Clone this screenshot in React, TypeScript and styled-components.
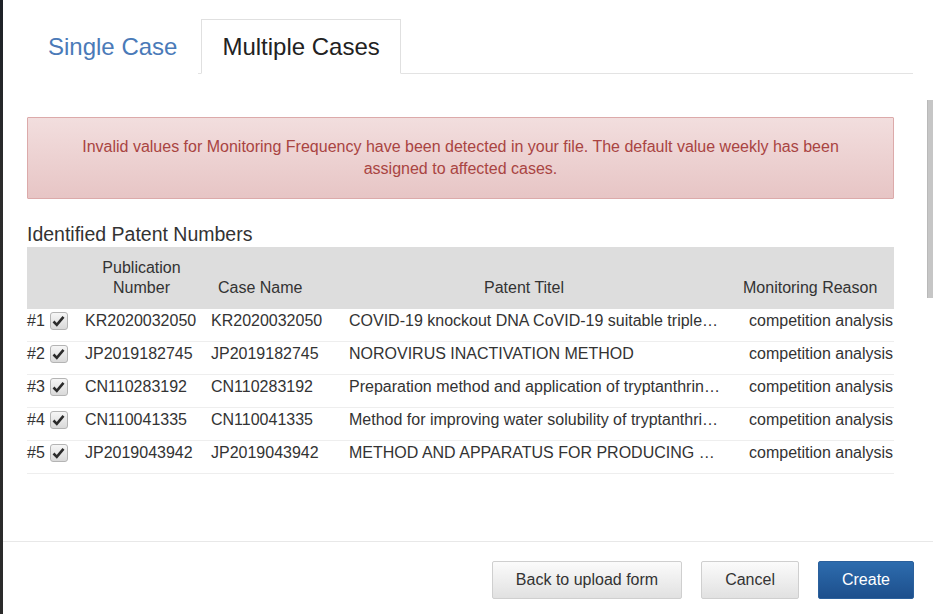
import React from "react";
import styled, { createGlobalStyle } from "styled-components";

interface IPatent {
  id: number;
  publication: string;
  caseName: string;
  title: string;
  reason: string;
}

const patents: IPatent[] = [
  {
    id: 1,
    publication: "KR2020032050",
    caseName: "KR2020032050",
    title: "COVID-19 knockout DNA CoVID-19 suitable triplex primer set and detection method",
    reason: "competition analysis",
  },
  {
    id: 2,
    publication: "JP2019182745",
    caseName: "JP2019182745",
    title: "NOROVIRUS INACTIVATION METHOD",
    reason: "competition analysis",
  },
  {
    id: 3,
    publication: "CN110283192",
    caseName: "CN110283192",
    title: "Preparation method and application of tryptanthrin derivatives",
    reason: "competition analysis",
  },
  {
    id: 4,
    publication: "CN110041335",
    caseName: "CN110041335",
    title: "Method for improving water solubility of tryptanthrin compounds",
    reason: "competition analysis",
  },
  {
    id: 5,
    publication: "JP2019043942",
    caseName: "JP2019043942",
    title: "METHOD AND APPARATUS FOR PRODUCING \u2026",
    reason: "competition analysis",
  },
];

const GlobalStyle = createGlobalStyle`
  html, body {
    margin: 0;
    padding: 0;
    background: #ffffff;
  }
  body {
    font-family: "Liberation Sans", Arial, sans-serif;
    color: #333333;
  }
`;

const App = () => {
  return (
    <Page>
      <GlobalStyle />
      <EdgeStrip />
      <Modal>
        <TabBar>
          <TabNav>
            <Tab>Single Case</Tab>
            <Tab $active>Multiple Cases</Tab>
          </TabNav>
        </TabBar>
        <Body>
          <Alert>
            Invalid values for Monitoring Frequency have been detected in your file. The default value weekly has been
            assigned to affected cases.
          </Alert>
          <SectionTitle>Identified Patent Numbers</SectionTitle>
          <HeadRow>
            <HeadCell />
            <HeadCell $align="center">
              Publication
              <br />
              Number
            </HeadCell>
            <HeadCell $pl={13}>Case Name</HeadCell>
            <HeadCell $align="center" $pr={38}>
              Patent Titel
            </HeadCell>
            <HeadCell>Monitoring Reason</HeadCell>
          </HeadRow>
          {patents.map((item) => (
            <Row key={`patent-${item.id}`}>
              <IndexCell>
                #{item.id}
                <CheckBox>
                  <svg width="13" height="12" viewBox="0 0 13 12">
                    <path d="M1.5 6.5 L4.8 9.8 L11.5 1.8" fill="none" stroke="#2b2b2b" strokeWidth="2.6" />
                  </svg>
                </CheckBox>
              </IndexCell>
              <Cell $pl={7}>{item.publication}</Cell>
              <Cell $pl={6}>{item.caseName}</Cell>
              <Cell $pl={6} $pr={20}>
                {item.title}
              </Cell>
              <Cell $pl={6}>{item.reason}</Cell>
            </Row>
          ))}
          <ScrollThumb />
        </Body>
        <Footer>
          <Button type="button">Back to upload form</Button>
          <Button type="button">Cancel</Button>
          <Button type="button" $primary>
            Create
          </Button>
        </Footer>
      </Modal>
    </Page>
  );
};

export default App;

const Page = styled.div`
  display: flex;
  width: 933px;
  height: 614px;
  overflow: hidden;
`;

const EdgeStrip = styled.div`
  width: 3px;
  flex: none;
  background: linear-gradient(#1d2127, #2c2c2c 30%, #2a2a2a);
`;

const Modal = styled.div`
  flex: 1;
  display: flex;
  flex-direction: column;
  background: #ffffff;
`;

const TabBar = styled.div`
  padding: 19px 20px 0 24px;
`;

const TabNav = styled.div`
  display: flex;
  gap: 3px;
  border-bottom: 1px solid #e3e3e3;
`;

const Tab = styled.div<{ $active?: boolean }>`
  padding: 13px 20px;
  margin-bottom: -1px;
  font-size: 24px;
  line-height: 27px;
  color: ${(p) => (p.$active ? "#222222" : "#4a7ab8")};
  background: #ffffff;
  border: 1px solid ${(p) => (p.$active ? "#e0e0e0" : "transparent")};
  border-bottom-color: ${(p) => (p.$active ? "#ffffff" : "transparent")};
`;

const Body = styled.div`
  position: relative;
  height: 467px;
  padding: 0 39px 0 24px;
  overflow: hidden;
`;

const Alert = styled.div`
  margin-top: 43px;
  padding: 18px 44px;
  font-size: 16px;
  line-height: 22px;
  text-align: center;
  color: #a94442;
  background: linear-gradient(#f2dede, #e7c5c5);
  border: 1px solid #dcaaaa;
  border-radius: 1px;
`;

const SectionTitle = styled.div`
  margin-top: 22px;
  font-size: 19.5px;
  line-height: 26px;
  color: #333333;
`;

const gridColumns = "51px 127px 138px 400px 151px";

const HeadRow = styled.div`
  display: grid;
  grid-template-columns: ${gridColumns};
  align-items: end;
  height: 62px;
  box-sizing: border-box;
  padding-bottom: 11px;
  background: #dddddd;
`;

const HeadCell = styled.div<{ $align?: "left" | "center"; $pl?: number; $pr?: number }>`
  font-size: 16px;
  line-height: 20px;
  color: #333333;
  text-align: ${(p) => p.$align ?? "left"};
  padding-left: ${(p) => p.$pl ?? 0}px;
  padding-right: ${(p) => p.$pr ?? 0}px;
`;

const Row = styled.div`
  display: grid;
  grid-template-columns: ${gridColumns};
  align-items: center;
  padding: 1px 0 10px;
  border-bottom: 1px solid #eeeeee;
  font-size: 16px;
  line-height: 21px;
  color: #333333;
`;

const IndexCell = styled.div`
  display: flex;
  align-items: center;
  gap: 5px;
`;

const CheckBox = styled.span`
  display: inline-flex;
  align-items: center;
  justify-content: center;
  width: 18px;
  height: 18px;
  box-sizing: border-box;
  border: 1px solid #b4b4b4;
  border-radius: 3px;
  background: linear-gradient(#f6f6f6, #d9d9d9);
`;

const Cell = styled.div<{ $pl?: number; $pr?: number }>`
  padding-left: ${(p) => p.$pl ?? 0}px;
  padding-right: ${(p) => p.$pr ?? 0}px;
  white-space: nowrap;
  overflow: hidden;
  text-overflow: ellipsis;
`;

const ScrollThumb = styled.div`
  position: absolute;
  top: 26px;
  right: 0;
  width: 6px;
  height: 198px;
  background: #c6c6c6;
  border-left: 1px solid #b9b9b9;
  box-sizing: border-box;
`;

const Footer = styled.div`
  display: flex;
  justify-content: flex-end;
  gap: 19px;
  padding: 19px 19px 0 0;
  border-top: 1px solid #e8e8e8;
  flex: 1;
`;

const Button = styled.button<{ $primary?: boolean }>`
  height: 38px;
  padding: 0 23px;
  font-family: "Liberation Sans", Arial, sans-serif;
  font-size: 16px;
  line-height: 20px;
  border-radius: 2px;
  cursor: pointer;
  color: ${(p) => (p.$primary ? "#ffffff" : "#333333")};
  border: 1px solid ${(p) => (p.$primary ? "#2b609c" : "#cfcfcf")};
  background: ${(p) =>
    p.$primary ? "linear-gradient(#2d6cae, #1d4f8c)" : "linear-gradient(#fbfbfb, #e1e1e1)"};
`;
